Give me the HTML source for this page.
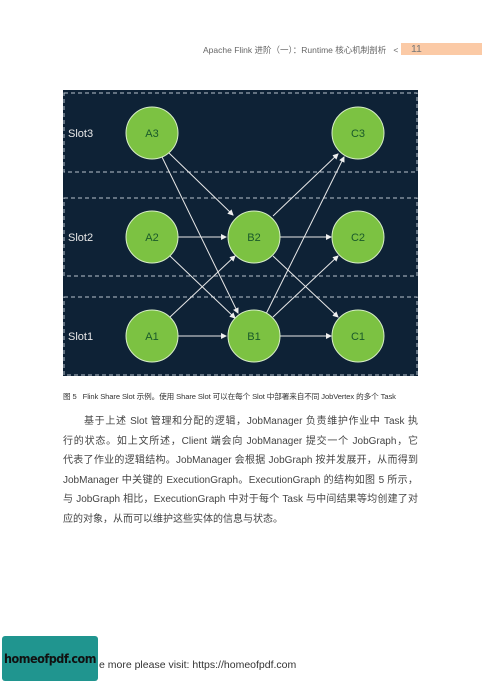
<!DOCTYPE html>
<html><head><meta charset="utf-8"><style>
body{margin:0;width:482px;height:681px;background:#fff;position:relative;overflow:hidden;font-family:"Liberation Sans","Noto Sans CJK SC",sans-serif;}
.hdr{position:absolute;left:203px;top:44px;font-size:8.5px;color:#666;white-space:nowrap}
.pn{position:absolute;left:401px;top:43px;width:81px;height:12px;background:#fbcaa6;color:#777;font-size:10.5px;line-height:12px;padding-left:10px;box-sizing:border-box}
.cap{position:absolute;left:63px;top:391px;font-size:7.6px;color:#333;white-space:nowrap;letter-spacing:-0.1px}
.body{position:absolute;left:63px;top:412px;width:355px;font-size:10px;line-height:19.5px;color:#444}
.body div{text-align:justify;text-align-last:justify;white-space:nowrap;height:19.5px}
.body div.l{text-align-last:left}
.logo{position:absolute;left:2px;top:636px;width:96px;height:45px;background:#20958f;border-radius:3px;color:#111;font-size:12.5px;font-weight:bold;line-height:45px;text-align:center;font-family:"DejaVu Sans Condensed","Liberation Sans Narrow",sans-serif;letter-spacing:-0.5px}
.ft{position:absolute;left:99px;top:659px;font-size:10.5px;color:#333;white-space:nowrap}
</style></head><body>
<div class="hdr">Apache Flink 进阶（一）：Runtime 核心机制剖析 &nbsp;&nbsp;&lt;</div>
<div class="pn">11</div>
<svg style="position:absolute;left:0;top:0" width="482" height="400">
<defs><marker id="a" markerWidth="6" markerHeight="6" refX="5" refY="3" orient="auto"><path d="M0,0 L6,3 L0,6z" fill="#eee"/></marker></defs>
<rect x="63" y="90" width="355" height="286" fill="#0e2236"/>
<g stroke="#b8c2cc" stroke-width="1" stroke-dasharray="4,3" fill="none">
<rect x="64" y="93" width="353" height="79"/>
<rect x="64" y="198" width="353" height="78"/>
<rect x="64" y="297" width="353" height="78"/>
</g>
<g fill="#e8e8e8" font-size="11">
<text x="68" y="137">Slot3</text><text x="68" y="241">Slot2</text><text x="68" y="340">Slot1</text>
</g>
<g stroke="#e8e8e8" stroke-width="1" marker-end="url(#a)">
<line x1="178" y1="237" x2="226" y2="237"/>
<line x1="178" y1="336" x2="226" y2="336"/>
<line x1="279" y1="237" x2="331" y2="237"/>
<line x1="279" y1="336" x2="331" y2="336"/>
<line x1="169" y1="153" x2="233" y2="215"/>
<line x1="162" y1="157" x2="238" y2="313"/>
<line x1="170" y1="256" x2="235" y2="318"/>
<line x1="170" y1="317" x2="235" y2="256"/>
<line x1="273" y1="216" x2="338" y2="154"/>
<line x1="266" y1="314" x2="344" y2="157"/>
<line x1="273" y1="317" x2="338" y2="256"/>
<line x1="273" y1="256" x2="338" y2="317"/>
</g>
<g fill="#7cc242" stroke="#d8eec8" stroke-width="1">
<circle cx="152" cy="133" r="26"/><circle cx="358" cy="133" r="26"/>
<circle cx="152" cy="237" r="26"/><circle cx="254" cy="237" r="26"/><circle cx="358" cy="237" r="26"/>
<circle cx="152" cy="336" r="26"/><circle cx="254" cy="336" r="26"/><circle cx="358" cy="336" r="26"/>
</g>
<g fill="#1a5a2a" font-size="11" text-anchor="middle">
<text x="152" y="137">A3</text><text x="358" y="137">C3</text>
<text x="152" y="241">A2</text><text x="254" y="241">B2</text><text x="358" y="241">C2</text>
<text x="152" y="340">A1</text><text x="254" y="340">B1</text><text x="358" y="340">C1</text>
</g>
</svg>
<div class="cap">图 5 &nbsp;&nbsp;Flink Share Slot 示例。使用 Share Slot 可以在每个 Slot 中部署来自不同 JobVertex 的多个 Task</div>
<div class="body">
<div style="padding-left:21px">基于上述 Slot 管理和分配的逻辑，JobManager 负责维护作业中 Task 执</div>
<div>行的状态。如上文所述，Client 端会向 JobManager 提交一个 JobGraph，它</div>
<div>代表了作业的逻辑结构。JobManager 会根据 JobGraph 按并发展开，从而得到</div>
<div>JobManager 中关键的 ExecutionGraph。ExecutionGraph 的结构如图 5 所示，</div>
<div>与 JobGraph 相比，ExecutionGraph 中对于每个 Task 与中间结果等均创建了对</div>
<div class="l">应的对象，从而可以维护这些实体的信息与状态。</div>
</div>
<div class="logo">homeofpdf.com</div>
<div class="ft">e more please visit: https://homeofpdf.com</div>
</body></html>
